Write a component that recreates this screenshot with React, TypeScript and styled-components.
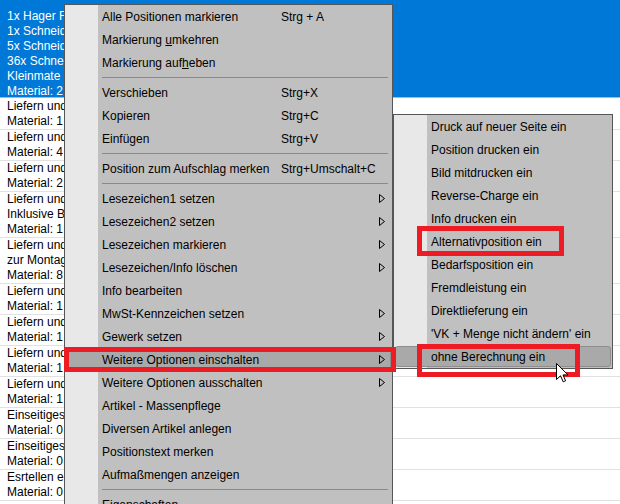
import React from 'react';
import styled, { createGlobalStyle } from 'styled-components';

const Global = createGlobalStyle`
  html, body { margin: 0; padding: 0; width: 620px; height: 504px; overflow: hidden; background: #fff; }
  body { font-family: "Liberation Sans", Arial, sans-serif; font-size: 12px; color: #000; }
`;

const Screen = styled.div`
  position: relative;
  width: 620px;
  height: 504px;
  overflow: hidden;
  background: #fff;
`;

const List = styled.div`
  display: flex;
  flex-direction: column;
`;

const SelectedBlock = styled.div`
  box-sizing: border-box;
  height: 98px;
  padding-top: 9px;
  background: #0078d7;
  color: #fff;
  border-bottom: 1px solid #e9a878;
  overflow: hidden;
`;

const Group = styled.div<{ $first?: boolean }>`
  padding-top: ${(p) => (p.$first ? 1 : 0)}px;
  border-bottom: 1px solid #e1e1e1;
`;

const Line = styled.div`
  box-sizing: border-box;
  width: 64px;
  height: 15px;
  line-height: 15px;
  padding-left: 7px;
  white-space: nowrap;
  overflow: hidden;
`;

const Menu = styled.div<{ $left: number; $top: number; $width: number }>`
  position: absolute;
  left: ${(p) => p.$left}px;
  top: ${(p) => p.$top}px;
  width: ${(p) => p.$width}px;
  box-sizing: border-box;
  border: 1px solid #565656;
  background: linear-gradient(to right, #e8e8e8 0 33px, #c0c0c0 33px);
  display: flex;
  flex-direction: column;
`;

const Item = styled.div<{ $active?: boolean }>`
  box-sizing: border-box;
  display: grid;
  grid-template-columns: 179px 98px 6px;
  align-items: center;
  height: ${(p) => (p.$active ? 21 : 23)}px;
  margin: ${(p) => (p.$active ? '1px 1px' : '0')};
  padding: 0 7px 0 ${(p) => (p.$active ? 35 : 37)}px;
  white-space: nowrap;
  ${(p) =>
    p.$active
      ? `background: #a9a9a9; border: 1px solid #8e8e8e; border-radius: 3px;`
      : ''}
`;

const SubItem = styled(Item)`
  grid-template-columns: 1fr;
`;

const Label = styled.span``;

const Shortcut = styled.span``;

const Mn = styled.span`
  text-decoration: underline;
  text-underline-offset: 1px;
`;

const Sep = styled.div`
  height: 7px;
  display: flex;
  align-items: center;
  padding: 0 4px 0 37px;
  &::after {
    content: '';
    flex: 1;
    height: 1px;
    background: #8a8a8a;
  }
`;

const Mark = styled.div<{ $left: number; $top: number; $w: number; $h: number }>`
  position: absolute;
  box-sizing: border-box;
  left: ${(p) => p.$left}px;
  top: ${(p) => p.$top}px;
  width: ${(p) => p.$w}px;
  height: ${(p) => p.$h}px;
  border: 5px solid #ed1c24;
  pointer-events: none;
`;

const Cursor = styled.svg`
  position: absolute;
  left: 556px;
  top: 363px;
`;

const Arrow = () => (
  <svg width="6" height="9" viewBox="0 0 6 9">
    <polygon points="0.5,0.5 5.5,4.5 0.5,8.5" fill="none" stroke="#000" strokeWidth="1" />
  </svg>
);

const selectedLines = [
  '1x Hager F',
  '1x Schneid',
  '5x Schneid',
  '36x Schne',
  'Kleinmate',
  'Material: 2',
];

const groups: string[][] = [
  ['Liefern und', 'Material: 1'],
  ['Liefern und', 'Material: 4'],
  ['Liefern und', 'Material: 2'],
  ['Liefern und', 'Inklusive B', 'Material: 1'],
  ['Liefern und', 'zur Montag', 'Material: 8'],
  ['Liefern und', 'Material: 1'],
  ['Liefern und', 'Material: 1'],
  ['Liefern und', 'Material: 1'],
  ['Liefern und', 'Material: 1'],
  ['Einseitiges', 'Material: 0'],
  ['Einseitiges', 'Material: 0'],
  ['Esrtellen e', 'Material: 0'],
];

type Entry =
  | { kind: 'sep' }
  | { kind: 'item'; label: React.ReactNode; shortcut?: string; sub?: boolean; active?: boolean };

const mainEntries: Entry[] = [
  { kind: 'item', label: 'Alle Positionen markieren', shortcut: 'Strg + A' },
  { kind: 'item', label: <>Markierung <Mn>u</Mn>mkehren</> },
  { kind: 'item', label: <>Markierung auf<Mn>h</Mn>eben</> },
  { kind: 'sep' },
  { kind: 'item', label: 'Verschieben', shortcut: 'Strg+X' },
  { kind: 'item', label: 'Kopieren', shortcut: 'Strg+C' },
  { kind: 'item', label: 'Einfügen', shortcut: 'Strg+V' },
  { kind: 'sep' },
  { kind: 'item', label: 'Position zum Aufschlag merken', shortcut: 'Strg+Umschalt+C' },
  { kind: 'sep' },
  { kind: 'item', label: 'Lesezeichen1 setzen', sub: true },
  { kind: 'item', label: 'Lesezeichen2 setzen', sub: true },
  { kind: 'item', label: 'Lesezeichen markieren', sub: true },
  { kind: 'item', label: 'Lesezeichen/Info löschen', sub: true },
  { kind: 'item', label: 'Info bearbeiten' },
  { kind: 'item', label: 'MwSt-Kennzeichen setzen', sub: true },
  { kind: 'item', label: 'Gewerk setzen', sub: true },
  { kind: 'item', label: 'Weitere Optionen einschalten', sub: true, active: true },
  { kind: 'item', label: 'Weitere Optionen ausschalten', sub: true },
  { kind: 'item', label: 'Artikel - Massenpflege' },
  { kind: 'item', label: 'Diversen Artikel anlegen' },
  { kind: 'item', label: 'Positionstext merken' },
  { kind: 'item', label: 'Aufmaßmengen anzeigen' },
  { kind: 'sep' },
  { kind: 'item', label: 'Eigenschaften' },
];

const subEntries = [
  'Druck auf neuer Seite ein',
  'Position drucken ein',
  'Bild mitdrucken ein',
  'Reverse-Charge ein',
  'Info drucken ein',
  'Alternativposition ein',
  'Bedarfsposition ein',
  'Fremdleistung ein',
  'Direktlieferung ein',
  "'VK + Menge nicht ändern' ein",
  'ohne Berechnung ein',
];

export default function App() {
  return (
    <Screen>
      <Global />
      <List>
        <SelectedBlock>
          {selectedLines.map((t, i) => (
            <Line key={i}>{t}</Line>
          ))}
        </SelectedBlock>
        {groups.map((g, gi) => (
          <Group key={gi} $first={gi === 0}>
            {g.map((t, i) => (
              <Line key={i}>{t}</Line>
            ))}
          </Group>
        ))}
      </List>

      <Menu $left={64} $top={4} $width={329}>
        {mainEntries.map((e, i) =>
          e.kind === 'sep' ? (
            <Sep key={i} />
          ) : (
            <Item key={i} $active={e.active}>
              <Label>{e.label}</Label>
              <Shortcut>{e.shortcut ?? ''}</Shortcut>
              {e.sub ? <Arrow /> : <span />}
            </Item>
          )
        )}
      </Menu>

      <Menu $left={393} $top={114} $width={220}>
        {subEntries.map((t, i) => (
          <SubItem key={i} $active={i === subEntries.length - 1}>
            <Label>{t}</Label>
          </SubItem>
        ))}
      </Menu>

      <Mark $left={64} $top={347} $w={332} $h={25} />
      <Mark $left={417} $top={226} $w={147} $h={30} />
      <Mark $left={417} $top={344} $w={163} $h={33} />

      <Cursor width="13" height="20" viewBox="0 0 13 20">
        <path
          d="M0.5,0.5 L0.5,16.5 L4.5,12.8 L7.2,18.8 L9.6,17.8 L7,11.9 L12,11.9 Z"
          fill="#fff"
          stroke="#000"
          strokeWidth="1"
          strokeLinejoin="miter"
        />
      </Cursor>
    </Screen>
  );
}
